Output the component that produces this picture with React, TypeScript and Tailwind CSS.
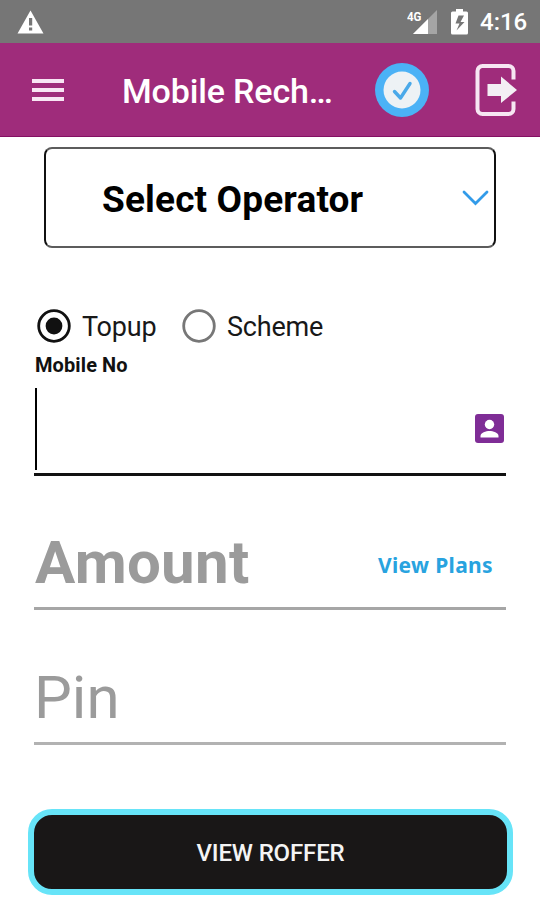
import { useState } from "react";

function StatusBar() {
  return (
    <div className="h-[43px] bg-[#767676] flex items-center text-white">
      <svg className="ml-[17px] w-[27px] h-6" viewBox="0 0 27 24">
        <path d="M13.5 0.5 26.5 23.5H0.5Z" fill="#fff" />
        <path d="M12 8h3.2v7.5H12zM12 17.5h3.2v3H12z" fill="#767676" />
      </svg>
      <div className="ml-auto flex items-center">
        <svg className="w-[32px] h-[26px]" viewBox="0 0 32 26">
          <path d="M30 1V25H6Z" fill="#a5a5a5" />
          <path d="M21 10V25H6Z" fill="#fff" />
          <text
            x="0"
            y="12"
            fontSize="13"
            fontWeight="700"
            fill="#fff"
            fontFamily="Roboto, sans-serif"
            textLength="14.5"
            lengthAdjust="spacingAndGlyphs"
          >
            4G
          </text>
        </svg>
        <svg className="ml-[12px] w-[17px] h-[26px]" viewBox="0 0 17 26">
          <path d="M5 0h7v2.5h3.5A1.5 1.5 0 0 1 17 4v20a1.5 1.5 0 0 1-1.5 1.5h-14A1.5 1.5 0 0 1 0 24V4a1.5 1.5 0 0 1 1.5-1.5H5z" fill="#fff" />
          <path d="M13 6.5H7.5l-3 8h4l-3 7 8-8.5h-4z" fill="#767676" />
        </svg>
        <span className="ml-[12px] mr-[13px] w-[47px] text-[24px] leading-[43px] font-medium relative top-px">
          4:16
        </span>
      </div>
    </div>
  );
}

function Header() {
  return (
    <header className="h-[94px] bg-[#9f2c7b] border-b border-[#841063] flex items-center">
      <button className="ml-8 w-8 flex flex-col gap-[5px]">
        <span className="h-1 bg-[#f8e6f4]" />
        <span className="h-1 bg-[#f8e6f4]" />
        <span className="h-1 bg-[#f8e6f4]" />
      </button>
      <h1 className="ml-[58px] w-[253px] text-[34px] leading-[40px] font-medium tracking-[-0.15px] text-white whitespace-nowrap relative top-px">
        Mobile Rech…
      </h1>
      <svg className="w-[54px] h-[54px]" viewBox="0 0 54 54">
        <circle cx="27" cy="27" r="27" fill="#4bb2f6" />
        <circle cx="27" cy="27" r="18.5" fill="#edf2f5" />
        <path d="m19.5 28.5 6 6.5L35 20.5" fill="none" stroke="#4aa9e9" strokeWidth="3.4" strokeLinecap="round" strokeLinejoin="round" />
      </svg>
      <svg className="ml-[46px] w-[43px] h-[54px]" viewBox="0 0 43 54">
        <path
          d="M38 16V7.500a5 5 0 0 0-5-5H7a5 5 0 0 0-5 5v38a5 5 0 0 0 5 5h26a5 5 0 0 0 5-5V38"
          transform="translate(.5 .5)"
          fill="none"
          stroke="#f6e6f2"
          strokeWidth="4"
        />
        <path d="M12.5 21H26v-7.500L42 27 26 40v-7H12.500z" fill="#f3eff4" />
      </svg>
    </header>
  );
}

type RadioProps = {
  label: string;
  checked: boolean;
  onSelect: () => void;
};

function Radio({ label, checked, onSelect }: RadioProps) {
  return (
    <button role="radio" aria-checked={checked} onClick={onSelect} className="flex items-center">
      <svg className="w-[34px] h-[34px]" viewBox="0 0 34 34">
        <circle cx="17" cy="17" r="15.3" fill="none" stroke={checked ? "#111" : "#777"} strokeWidth="2.8" />
        {checked && <circle cx="17" cy="17" r="8.4" fill="#111" />}
      </svg>
      <span className="ml-[11px] text-[27px] leading-[34px] tracking-[-0.2px] text-[#181818] whitespace-nowrap relative top-px">
        {label}
      </span>
    </button>
  );
}

export default function App() {
  const [type, setType] = useState("topup");

  return (
    <div className="w-[540px] h-[900px] bg-white overflow-hidden font-[Roboto,sans-serif]">
      <StatusBar />
      <Header />
      <main className="px-[34px]">
        <button className="mt-[10px] ml-[10px] w-[452px] h-[101px] border-2 border-x-[#111] border-y-[#5c5c5c] rounded-lg flex items-center justify-between">
          <span className="ml-[56px] text-[37px] leading-[44px] font-bold tracking-[0.15px] text-black whitespace-nowrap relative top-[2px]">
            Select Operator
          </span>
          <svg className="mr-[5px] w-[27px] h-4" viewBox="0 0 27 16">
            <path d="m2 2 11.5 11.5L25 2" fill="none" stroke="#329be9" strokeWidth="2.8" strokeLinecap="round" />
          </svg>
        </button>

        <div role="radiogroup" className="mt-[61px] ml-[3px] flex">
          <div className="w-[145px]">
            <Radio label="Topup" checked={type === "topup"} onSelect={() => setType("topup")} />
          </div>
          <Radio label="Scheme" checked={type === "scheme"} onSelect={() => setType("scheme")} />
        </div>

        <p className="mt-[9px] ml-px text-[20px] leading-[26px] font-bold tracking-[0.1px] text-[#111]">Mobile No</p>
        <div className="mt-[10px] h-[88px] w-[472px] border-b-[3px] border-[#111] flex items-start">
          <span className="ml-px w-[2px] h-[82px] bg-black" />
          <svg className="ml-auto mr-[2px] mt-[26px] w-[29px] h-[29px]" viewBox="0 0 29 29">
            <rect width="29" height="29" rx="3" fill="#7f2d96" />
            <circle cx="14.5" cy="10.5" r="4.7" fill="#fff" />
            <path d="M5.5 23.5V22c0-3.3 5.5-5 9-5s9 1.7 9 5v1.5z" fill="#fff" />
          </svg>
        </div>

        <div className="mt-[44px] h-[90px] w-[472px] border-b-[3px] border-[#a6a6a6] flex items-center justify-between">
          <span className="mb-[2px] ml-px text-[60px] leading-[70px] font-bold tracking-[0.3px] text-[#9b9b9b]">
            Amount
          </span>
          <button className="mr-[13px] mt-[2px] text-[21px] leading-[30px] font-bold tracking-[0.35px] text-[#28a3df] font-['Noto_Sans',sans-serif] whitespace-nowrap">
            View Plans
          </button>
        </div>

        <div className="mt-[45px] h-[90px] w-[472px] border-b-[3px] border-[#b2b2b2] flex items-center">
          <span className="mb-[2px] text-[60px] leading-[70px] text-[#9b9b9b]">Pin</span>
        </div>
      </main>

      <button className="mt-[64px] ml-[28px] w-[485px] h-[86px] rounded-[24px] border-[6px] border-[#67e4f8] bg-[#191717] text-[24px] font-medium tracking-[-0.15px] text-[#f4f4f4] whitespace-nowrap">
        <span className="relative top-px">VIEW ROFFER</span>
      </button>
    </div>
  );
}
